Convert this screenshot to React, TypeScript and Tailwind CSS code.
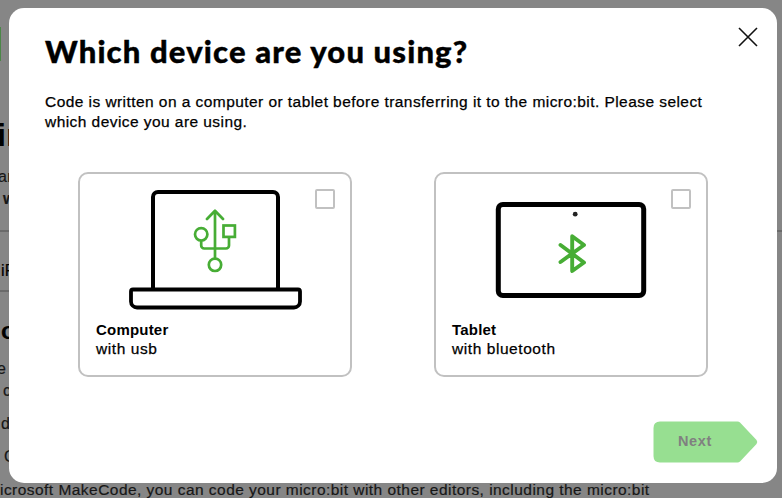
import React from 'react';

const sans = "font-['Liberation_Sans',Arial,sans-serif]";

function Fragment({ className, children }: { className: string; children: React.ReactNode }) {
  return <div className={`overflow-visible whitespace-nowrap ${className}`}>{children}</div>;
}

function PageBehind() {
  return (
    <div className="flex h-[498px] w-[782px] flex-col overflow-hidden bg-[#868686] text-[16px] leading-[22px] tracking-[0.3px] text-[#171717] [-webkit-text-stroke:0.2px] *:shrink-0">
      <div className="mt-[27px] h-[34px] w-px bg-[#4b8747]" />
      <Fragment className="mt-[54px] -ml-[3px] h-[40px] text-[32px] leading-[40px] font-bold text-black">in</Fragment>
      <Fragment className="mt-[11px] -ml-[2px]">ar</Fragment>
      <Fragment className="ml-[3px] h-[22px] font-bold">w</Fragment>
      <div className="mt-[20px] h-[2px] bg-[#6b6b6b]" />
      <Fragment className="mt-[28px] ml-px h-[22px] text-black">iP</Fragment>
      <div className="mt-[8px] h-[2px] w-[9px] bg-[#6b6b6b]" />
      <Fragment className="mt-[26px] ml-px h-[26px] text-[24px] leading-[26px] font-bold text-black">o</Fragment>
      <Fragment className="mt-[14px] -ml-[3px]">e</Fragment>
      <Fragment className="ml-[3px]">c</Fragment>
      <Fragment className="mt-[11px] ml-px">d</Fragment>
      <Fragment className="mt-[11px] ml-[4px]">C</Fragment>
      <Fragment className="mt-[11px] text-[15.5px] tracking-[0.46px]">icrosoft MakeCode, you can code your micro:bit with other editors, including the micro:bit</Fragment>
    </div>
  );
}

function Laptop() {
  return (
    <svg width="174" height="122" viewBox="128 189 174 122" fill="none" className="block">
      <path d="M153 290V197a5 5 0 0 1 5-5H273a5 5 0 0 1 5 5V290" stroke="#000" strokeWidth="4" />
      <path d="M133 289.500H298a2 2 0 0 1 2 2V301.500a6 6 0 0 1-6 6H137a6 6 0 0 1-6-6V291.500a2 2 0 0 1 2-2Z" stroke="#000" strokeWidth="3.800" />
      <g stroke="#47ad35" strokeWidth="2.700" strokeLinecap="round" strokeLinejoin="round">
        <path d="M215 258V210.800M207 219L215 210.800L223 219M201.200 241v4.500a3 3 0 0 0 3 3H226a3 3 0 0 0 3-3V237.500" />
        <circle cx="201.200" cy="234.300" r="6.200" />
        <rect x="223.500" y="225.500" width="11.400" height="11.400" strokeLinejoin="miter" />
        <circle cx="215" cy="264.800" r="6.200" />
      </g>
    </svg>
  );
}

function Tablet() {
  return (
    <svg width="152" height="98" viewBox="495 201 152 98" fill="none" className="block">
      <rect x="498.300" y="204.500" width="145.400" height="91" rx="4.500" stroke="#000" strokeWidth="5" />
      <circle cx="575.200" cy="214.200" r="2.400" fill="#222" />
      <path d="M560.500 245L584 262.500L572.200 271V236.300L584 245L560.500 262" stroke="#47ad35" strokeWidth="3.900" strokeLinecap="round" strokeLinejoin="round" />
    </svg>
  );
}

function DeviceCard({ title, detail, art, artClass }: { title: string; detail: string; art: React.ReactNode; artClass: string }) {
  return (
    <button className="relative flex h-[205px] w-[274px] flex-col rounded-[10px] border-2 border-[#c1c1c1] bg-white text-left">
      <span className="absolute top-[15px] right-[15px] size-5 rounded-[2px] border-2 border-[#c1c1c1]" />
      <span className={`flex h-[146px] w-full shrink-0 ${artClass}`}>{art}</span>
      <span className="pl-4 text-[15px] leading-[19px] font-bold tracking-[0.2px]">{title}</span>
      <span className="pl-4 text-[15.5px] leading-[19px] tracking-[0.57px] [-webkit-text-stroke:0.25px]">{detail}</span>
    </button>
  );
}

function Dialog() {
  return (
    <div className="flex h-[475px] w-[768px] flex-col rounded-[15px] bg-white pt-[22px] pr-[19px] pl-9 text-black">
      <div className="flex h-[44px] items-start justify-between">
        <h1 className="-mt-px font-[Lato,sans-serif] text-[31px] leading-[44px] font-black tracking-[1.15px] whitespace-nowrap [-webkit-text-stroke:0.4px]">Which device are you using?</h1>
        <svg width="20" height="20" viewBox="0 0 20 20" className="-mt-[3px]" stroke="#111" strokeWidth="1.600">
          <path d="M1 1L19 19M19 1L1 19" />
        </svg>
      </div>
      <p className="mt-[18px] h-[40px] text-[15.5px] leading-[20px] tracking-[0.44px] whitespace-nowrap [-webkit-text-stroke:0.25px]">
        Code is written on a computer or tablet before transferring it to the micro:bit. Please select
        <br />
        which device you are using.
      </p>
      <div className="mt-[40px] ml-[33px] flex gap-[82px]">
        <DeviceCard title="Computer" detail="with usb" art={<Laptop />} artClass="pt-[15px] pl-[48px]" />
        <DeviceCard title="Tablet" detail="with bluetooth" art={<Tablet />} artClass="pt-[27px] pl-[59px]" />
      </div>
      <div className="mt-[44px] flex justify-end">
        <button className="grid h-[42px] w-[105px] text-[#808080]">
          <svg width="105" height="42" viewBox="0 0 105 42" className="col-start-1 row-start-1">
            <path d="M7 .5H84.500Q86 .5 87 1.500L103.500 19Q105 21 103.500 23L87 40.500Q86 41.500 84.500 41.500H7Q.5 41.500 .5 35V7Q.5 .5 7 .5Z" fill="#97df91" />
          </svg>
          <span className="col-start-1 row-start-1 pt-[10px] pl-[25px] text-left text-[14.5px] leading-[20px] font-bold tracking-[0.6px]">Next</span>
        </button>
      </div>
    </div>
  );
}

export default function App() {
  return (
    <main className={`relative h-[498px] w-[782px] overflow-hidden ${sans}`}>
      <PageBehind />
      <div className="absolute inset-0 pt-2 pl-[9px]">
        <Dialog />
      </div>
    </main>
  );
}
